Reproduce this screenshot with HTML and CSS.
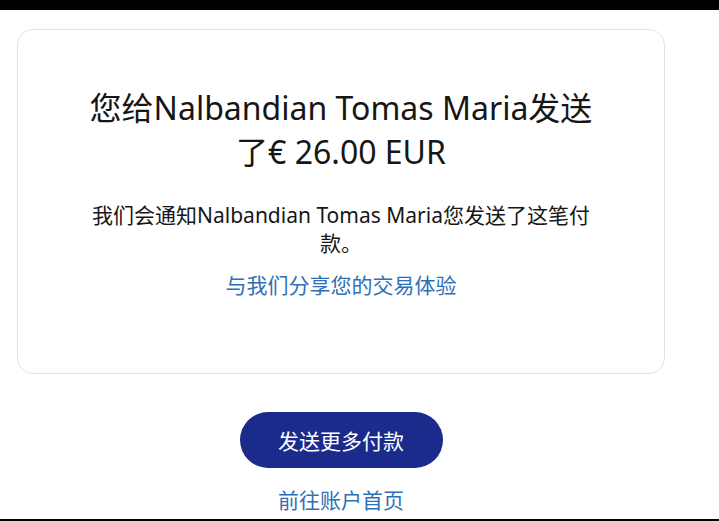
FILE: index.html
```html
<!DOCTYPE html>
<html lang="zh-CN">
<head>
    <meta charset="UTF-8">
    <meta name="viewport" content="width=device-width, initial-scale=1.0">
    <title>付款已发送</title>
    <link rel="stylesheet" href="styles.css">
</head>
<body>
    <div class="topbar"></div>
    <div class="page">
        <div class="card">
            <h1 class="title">您给Nalbandian Tomas Maria发送了€ 26.00 EUR</h1>
            <p class="note">我们会通知Nalbandian Tomas Maria您发送了这笔付款。</p>
            <a class="link share" href="#">与我们分享您的交易体验</a>
        </div>
        <div class="actions">
            <button class="btn-primary" type="button">发送更多付款</button>
            <a class="link home" href="#">前往账户首页</a>
        </div>
    </div>
    <div class="bottombar"></div>
</body>
</html>
```

FILE: styles.css
```css
body {
    font-family: "Noto Sans", "Noto Sans CJK SC", sans-serif;
    margin: 0;
    padding: 0;
    background: #fff;
    color: #161616;
    height: 521px;
    overflow: hidden;
    position: relative;
}
.topbar {
    height: 10px;
    background: #000;
}
.page {
    width: 648px;
    margin-left: 17px;
    padding-top: 19px;
}
.card {
    box-sizing: border-box;
    height: 345px;
    border: 1px solid #e3e3e3;
    border-radius: 16px;
    padding: 56px 60px 0;
    text-align: center;
}
.title {
    font-size: 32px;
    font-weight: 400;
    line-height: 44px;
    margin: 0 auto;
    max-width: 515px;
}
.note {
    font-size: 21px;
    line-height: 28px;
    margin: 27px auto 12px;
    max-width: 500px;
}
.link {
    color: #2e6fb7;
    text-decoration: none;
    font-size: 21px;
}
.share {
    display: inline-block;
}
.actions {
    display: flex;
    flex-direction: column;
    align-items: center;
    padding-top: 38px;
}
.btn-primary {
    font-family: inherit;
    width: 203px;
    height: 56px;
    border: none;
    border-radius: 28px;
    background: #1b2b8c;
    color: #fff;
    font-size: 21px;
    cursor: pointer;
}
.home {
    margin-top: 16px;
}
.bottombar {
    position: absolute;
    left: 0;
    right: 0;
    bottom: 0;
    height: 2px;
    background: #000;
}
```
